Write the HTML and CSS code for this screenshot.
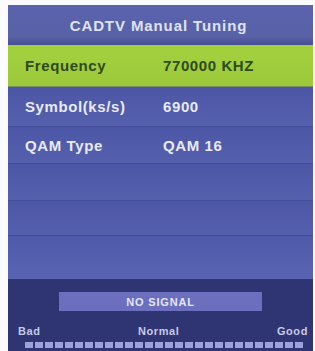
FILE: index.html
```html
<!DOCTYPE html>
<html>
<head>
<meta charset="utf-8">
<link rel="stylesheet" href="styles.css">
</head>
<body>
<div class="panel">
  <div class="header">CADTV Manual Tuning</div>
  <div class="row active"><span class="label">Frequency</span><span class="value">770000 KHZ</span></div>
  <div class="row r2"><span class="label">Symbol(ks/s)</span><span class="value">6900</span></div>
  <div class="row r3"><span class="label">QAM Type</span><span class="value">QAM 16</span></div>
  <div class="row r4"></div>
  <div class="row r5"></div>
  <div class="row r6"></div>
  <div class="bottom">
    <div class="nosignal">NO SIGNAL</div>
    <div class="scale"><span>Bad</span><span>Normal</span><span>Good</span></div>
    <div class="meter">
      <i></i><i></i><i></i><i></i><i></i><i></i><i></i><i></i><i></i><i></i>
      <i></i><i></i><i></i><i></i><i></i><i></i><i></i><i></i><i></i><i></i>
      <i></i><i></i><i></i><i></i><i></i><i></i><i></i><i></i>
    </div>
  </div>
</div>
</body>
</html>
```

FILE: styles.css
```css
html, body { margin: 0; padding: 0; background: #fbfbfd; }
body { width: 315px; height: 351px; overflow: hidden; }
.panel {
  margin: 5px 2px 0 8px;
  height: 346px;
  display: flex;
  flex-direction: column;
  background: #4f5aa8;
  font-family: "Liberation Sans", Arial, sans-serif;
  font-weight: bold;
}
.header {
  height: 40px;
  flex: none;
  display: flex;
  align-items: center;
  justify-content: center;
  background: linear-gradient(#5a62ad, #5961a6 80%, #474d92);
  color: #dfe2f2;
  font-size: 15px;
  letter-spacing: 0.9px;
  padding-right: 4px;
  box-sizing: border-box;
}
.row {
  flex: none;
  display: flex;
  align-items: center;
  box-sizing: border-box;
  color: #e8eaf6;
  font-size: 15px;
  background: linear-gradient(#4c56a6, #5560ad);
  border-bottom: 1px solid #434c98;
  letter-spacing: 0.6px;
}
.row.active {
  height: 42px;
  background: linear-gradient(#a3d13e, #9bc93b);
  color: #2f4a1c;
  border-bottom: 1px solid #7a8f5a;
}
.r2 { height: 40px; }
.r3 { height: 37px; }
.r4 { height: 37px; }
.r5 { height: 35px; }
.r6 { height: 43px; border-bottom: none; background: linear-gradient(#4f5aaa, #5864b2); }
.label { width: 138px; padding-left: 17px; }
.bottom {
  flex: 1;
  background: #2f3472;
  display: flex;
  flex-direction: column;
  align-items: center;
}
.nosignal {
  margin-top: 13px;
  width: 203px;
  height: 19px;
  background: #6b6fbe;
  color: #e4e6f6;
  font-size: 11px;
  letter-spacing: 0.8px;
  display: flex;
  align-items: center;
  justify-content: center;
}
.scale {
  margin-top: 14px;
  width: 100%;
  box-sizing: border-box;
  padding: 0 5px 0 10px;
  display: flex;
  justify-content: space-between;
  color: #c7cae9;
  font-size: 11px;
  letter-spacing: 0.6px;
}
.meter {
  margin-top: 5px;
  display: flex;
  gap: 2px;
  align-self: flex-start;
  margin-left: 17px;
}
.meter i {
  display: block;
  width: 8px;
  height: 6px;
  background: #9ea2da;
}
```
